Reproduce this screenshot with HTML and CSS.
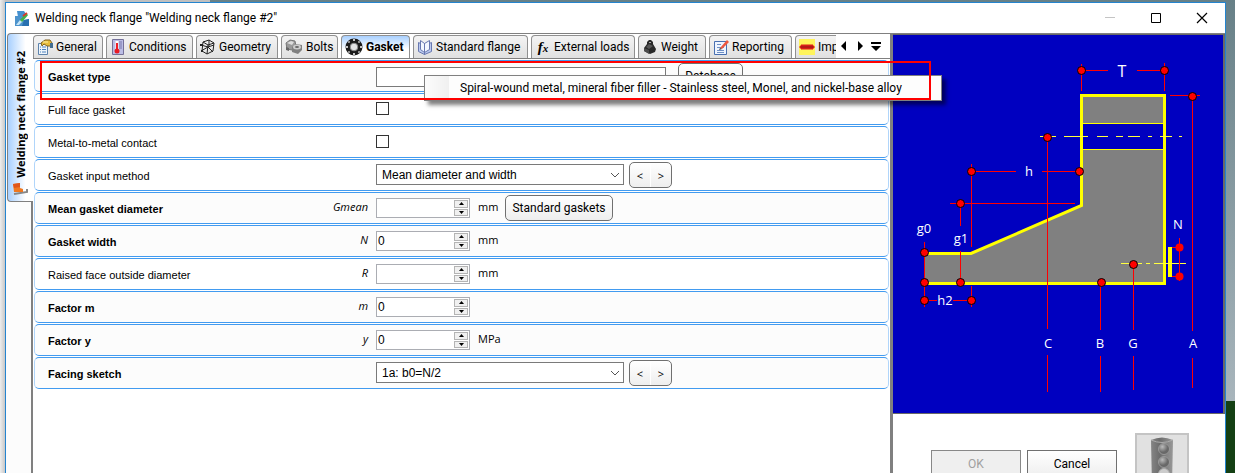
FILE: index.html
```html
<!DOCTYPE html>
<html lang="en">
<head>
    <meta charset="UTF-8">
    <meta name="viewport" content="width=device-width, initial-scale=1.0">
    <title>Welding neck flange</title>
    <link rel="stylesheet" href="styles.css">
</head>
<body>
    <div class="window">
        <header class="titlebar">
            <svg class="app-icon" width="17" height="17" viewBox="0 0 17 17">
                <path d="M1 6h4l4 2 1 2 5-1v7H1z" fill="#4d93cc"/>
                <path d="M10 10l5-1v7H8z" fill="#2870b0"/>
                <path d="M2 15l4-5 3 1-4 4z" fill="#c8e6f8"/>
                <path d="M3 1h7l2 3-3 4-5-1z" fill="#4590cf"/>
                <path d="M7 11l6-7" stroke="#43b04c" stroke-width="3"/>
                <path d="M9 6l4-3" stroke="#d93a2b" stroke-width="2"/>
            </svg>
            <h1 class="title">Welding neck flange "Welding neck flange #2"</h1>
            <div class="window-controls">
                <button class="control" aria-label="Minimize" disabled>
                    <svg width="12" height="12"><path d="M1 5.500h10" stroke="#c4c4c4"/></svg>
                </button>
                <button class="control" aria-label="Maximize">
                    <svg width="12" height="12"><path d="M1.500 1.500h9v9h-9z" stroke="#000" fill="none"/></svg>
                </button>
                <button class="control" aria-label="Close">
                    <svg width="12" height="12"><path d="M1 1l10 10M11 1L1 11" stroke="#000" stroke-width="1.200"/></svg>
                </button>
            </div>
        </header>

        <div class="content">
            <nav class="side-tabs">
                <button class="side-tab">
                    <svg width="15" height="14" viewBox="0 0 15 14">
                        <path d="M1 12l13-2v-3" stroke="#888" stroke-width="2" fill="none"/>
                        <path d="M0 2l7-1v5l3 1v3H1z" fill="#f07820"/>
                        <path d="M0 2l7-1v4l-6 1z" fill="#e0561a"/>
                    </svg>
                    <span>Welding neck flange #2</span>
                </button>
            </nav>

            <main class="main">
                <div class="tab-bar">
                    <div class="tabs" role="tablist">
                        <button class="tab" role="tab">
                            <svg width="16" height="16" viewBox="0 0 16 16">
                                <path d="M1.500 4.500h9v11h-9z" fill="#eef5fb" stroke="#5d83ad"/>
                                <path d="M3 8h1M3 10.500h1M3 13h1M5 8h4M5 10.500h4M5 13h4" stroke="#4e82bd"/>
                                <path d="M4 4l4-3h5l2 3-1 3h-4L7 5 5 7z" fill="#e8bd3b" stroke="#806120"/>
                                <path d="M6 3h5" stroke="#fff1a5"/>
                                <path d="M13 4h3v5h-3z" fill="#426d91"/>
                            </svg>
                            General
                        </button>
                        <button class="tab" role="tab">
                            <svg width="16" height="16" viewBox="0 0 16 16">
                                <path d="M2.500.500h11v15h-11z" fill="#bbbde5" stroke="#747099"/>
                                <path d="M9 3h3M9 5h3M9 7h3M9 9h3" stroke="#7777aa"/>
                                <path d="M7 2v10" stroke="#fff" stroke-width="3"/>
                                <path d="M7 4v8" stroke="#ef2028" stroke-width="2"/>
                                <circle cx="7" cy="12" r="2.500" fill="#e81b24"/>
                            </svg>
                            Conditions
                        </button>
                        <button class="tab" role="tab">
                            <svg width="16" height="16" viewBox="0 0 16 16" fill="none" stroke="#222">
                                <path d="M3 3l6-2 5 3-1 8-6 3-5-3zM3 3l5 3 6-2M8 6l-1 9M1 6l7 2 6-2M1 12l7-4 5 5M9 1v7"/>
                                <path d="M0 5h3v2H0zM1 11h2v2H1z" fill="#222" stroke="none"/>
                            </svg>
                            Geometry
                        </button>
                        <button class="tab" role="tab">
                            <svg width="18" height="16" viewBox="0 0 18 16">
                                <path d="M1 4l4-3 5 1 1 5-4 4-5-1z" fill="#999" stroke="#777"/>
                                <path d="M2 4l4-2 3 1-2 3z" fill="#ddd"/>
                                <path d="M1 8l3 1v3l-3-1z" fill="#666"/>
                                <path d="M7 8l4-3 6 1v5l-4 4-6-2z" fill="#808080"/>
                                <ellipse cx="12" cy="8" rx="4" ry="2.500" fill="#ccc"/>
                                <ellipse cx="12" cy="8" rx="2" ry="1" fill="#666"/>
                            </svg>
                            Bolts
                        </button>
                        <button class="tab tab-active" role="tab" aria-selected="true">
                            <svg width="18" height="18" viewBox="0 0 18 18">
                                <circle cx="9" cy="9" r="8.500" fill="#1b1b1b"/>
                                <circle cx="9" cy="9" r="3.800" fill="#e4e4e4" stroke="#888"/>
                                <path d="M9 1v2M9 15v2M1 9h2M15 9h2M3.500 3.500l1 1M13.500 13.500l1 1M3.500 14.500l1-1M13.500 4.500l1-1" stroke="#fff" stroke-width="1.500"/>
                            </svg>
                            Gasket
                        </button>
                        <button class="tab" role="tab">
                            <svg width="16" height="16" viewBox="0 0 16 16" stroke="#6878b0">
                                <path d="M1.500 3.500l6 3v9l-6-3zM14.500 3.500l-7 3v9l7-3z" fill="#bccaf0"/>
                                <path d="M3.500 1.500l4 3v9l-4-3zM12.500 1.500l-5 3v9l5-3z" fill="#f3f7ff"/>
                            </svg>
                            Standard flange
                        </button>
                        <button class="tab" role="tab">
                            <span class="fx">f<small>x</small></span>
                            External loads
                        </button>
                        <button class="tab" role="tab">
                            <svg width="16" height="16" viewBox="0 0 16 16">
                                <path d="M5 5V3l2-2h2l2 2v2l3 5-1 3-5 2-6-3 0-3z" fill="#292929"/>
                                <path d="M7 4V3h2v1z" fill="#aaa"/>
                                <path d="M2 9l5 2v4l-5-3z" fill="#4c4c4c"/>
                                <path d="M4 8l3-3 4 2-4 3z" fill="#575757"/>
                            </svg>
                            Weight
                        </button>
                        <button class="tab" role="tab">
                            <svg width="16" height="16" viewBox="0 0 16 16">
                                <path d="M1.500 2.500h12v13h-12z" fill="#edf4ff" stroke="#486fb1"/>
                                <path d="M4 5.500h4M4 8.500h7M4 11.500h7M4 13.500h7" stroke="#6d8fc5"/>
                                <path d="M7 9l7-8 2 2-7 7z" fill="#ed573e"/>
                                <path d="M7 9l-1 2 3-1z" fill="#333"/>
                            </svg>
                            Reporting
                        </button>
                        <button class="tab" role="tab">
                            <svg width="16" height="16" viewBox="0 0 16 16">
                                <path d="M0 0h16v16H0z" fill="#fff45c"/>
                                <path d="M0 8l3-3 1 1 1-1 1 1 1-1 1 1 1-1 1 1 1-1 1 1 1-1 3 3-3 3-1-1-1 1-1-1-1 1-1-1-1 1-1-1-1 1-1-1-1 1z" fill="#d91e18"/>
                                <path d="M2 8h12" stroke="#8e1712"/>
                            </svg>
                            Import
                        </button>
                    </div>
                    <div class="tab-scroll">
                        <button aria-label="Scroll left"><svg width="16" height="16"><path d="M10 3v10L5 8z"/></svg></button>
                        <button aria-label="Scroll right"><svg width="16" height="16"><path d="M6 3v10l5-5z"/></svg></button>
                        <button aria-label="Tab list"><svg width="16" height="16"><path d="M3 4h10v2H3zM3 8h10l-5 5z"/></svg></button>
                    </div>
                </div>

                <form class="form">
                    <div class="row row-required">
                        <label class="label" for="gasket-type">Gasket type</label>
                        <span class="symbol"></span>
                        <input class="text-field" id="gasket-type" type="text">
                        <button class="btn btn-database" type="button">Database</button>
                    </div>
                    <div class="row">
                        <label class="label" for="full-face">Full face gasket</label>
                        <span class="symbol"></span>
                        <input class="check" id="full-face" type="checkbox">
                    </div>
                    <div class="row">
                        <label class="label" for="metal-contact">Metal-to-metal contact</label>
                        <span class="symbol"></span>
                        <input class="check" id="metal-contact" type="checkbox">
                    </div>
                    <div class="row">
                        <label class="label" for="input-method">Gasket input method</label>
                        <span class="symbol"></span>
                        <div class="select">
                            <select id="input-method"><option>Mean diameter and width</option></select>
                            <svg width="10" height="6"><path d="M1 1l4 4 4-4" fill="none" stroke="#555"/></svg>
                        </div>
                        <div class="stepper"><button type="button">&lt;</button><button type="button">&gt;</button></div>
                    </div>
                    <div class="row row-required">
                        <label class="label" for="gmean">Mean gasket diameter</label>
                        <span class="symbol">Gmean</span>
                        <div class="number">
                            <input id="gmean" type="text">
                            <div class="spin">
                                <button type="button" aria-label="Increase"><svg width="5" height="3"><path d="M0 3h5L2.500 0z"/></svg></button>
                                <button type="button" aria-label="Decrease"><svg width="5" height="3"><path d="M0 0h5L2.500 3z"/></svg></button>
                            </div>
                        </div>
                        <span class="unit">mm</span>
                        <button class="btn" type="button">Standard gaskets</button>
                    </div>
                    <div class="row row-required">
                        <label class="label" for="width">Gasket width</label>
                        <span class="symbol">N</span>
                        <div class="number">
                            <input id="width" type="text" value="0">
                            <div class="spin">
                                <button type="button" aria-label="Increase"><svg width="5" height="3"><path d="M0 3h5L2.500 0z"/></svg></button>
                                <button type="button" aria-label="Decrease"><svg width="5" height="3"><path d="M0 0h5L2.500 3z"/></svg></button>
                            </div>
                        </div>
                        <span class="unit">mm</span>
                    </div>
                    <div class="row">
                        <label class="label" for="raised">Raised face outside diameter</label>
                        <span class="symbol">R</span>
                        <div class="number">
                            <input id="raised" type="text">
                            <div class="spin">
                                <button type="button" aria-label="Increase"><svg width="5" height="3"><path d="M0 3h5L2.500 0z"/></svg></button>
                                <button type="button" aria-label="Decrease"><svg width="5" height="3"><path d="M0 0h5L2.500 3z"/></svg></button>
                            </div>
                        </div>
                        <span class="unit">mm</span>
                    </div>
                    <div class="row row-required">
                        <label class="label" for="factor-m">Factor m</label>
                        <span class="symbol">m</span>
                        <div class="number">
                            <input id="factor-m" type="text" value="0">
                            <div class="spin">
                                <button type="button" aria-label="Increase"><svg width="5" height="3"><path d="M0 3h5L2.500 0z"/></svg></button>
                                <button type="button" aria-label="Decrease"><svg width="5" height="3"><path d="M0 0h5L2.500 3z"/></svg></button>
                            </div>
                        </div>
                    </div>
                    <div class="row row-required">
                        <label class="label" for="factor-y">Factor y</label>
                        <span class="symbol">y</span>
                        <div class="number">
                            <input id="factor-y" type="text" value="0">
                            <div class="spin">
                                <button type="button" aria-label="Increase"><svg width="5" height="3"><path d="M0 3h5L2.500 0z"/></svg></button>
                                <button type="button" aria-label="Decrease"><svg width="5" height="3"><path d="M0 0h5L2.500 3z"/></svg></button>
                            </div>
                        </div>
                        <span class="unit">MPa</span>
                    </div>
                    <div class="row row-required">
                        <label class="label" for="facing">Facing sketch</label>
                        <span class="symbol"></span>
                        <div class="select">
                            <select id="facing"><option>1a: b0=N/2</option></select>
                            <svg width="10" height="6"><path d="M1 1l4 4 4-4" fill="none" stroke="#555"/></svg>
                        </div>
                        <div class="stepper"><button type="button">&lt;</button><button type="button">&gt;</button></div>
                    </div>
                </form>
            </main>

            <aside class="side">
                <svg class="diagram" viewBox="893 35 330 378" role="img" aria-label="Flange sketch">
                    <!-- flange body -->
                    <path d="M924 253H971L1081 205V96H1164V283H924z" fill="#808080"/>
                    <path d="M1082 123h82v27h-82z" fill="#0000c0"/>
                    <path d="M1082 123.500h82M1082 149.500h82" stroke="#ffff00"/>
                    <path d="M924 253.500H971L1081.500 205.500V95.500H1164.500V283.500H924" fill="none" stroke="#ffff00" stroke-width="3"/>
                    <path d="M1170 247v30" stroke="#ffff00" stroke-width="4"/>
                    <!-- centre lines -->
                    <path d="M1040 136.500h16M1064 136.500h24M1097 136.500h11M1116 136.500h7M1128 136.500h12M1148 136.500h4M1160 136.500h12M1179 136.500h3M1121 263.500h21M1146 263.500h4M1154 263.500h32" stroke="#ffff40"/>
                    <!-- dimension lines -->
                    <g stroke="#ff0000" fill="none">
                        <path d="M1081.500 64v27M1164.500 63v28M1086 70.500h22M1137 70.500h23"/>
                        <path d="M1170 95.500h30M1192.500 96v235M1192.500 358v30"/>
                        <path d="M1047.500 137v192M1047.500 355v37"/>
                        <path d="M971.500 164v83M971.500 286v21M976 171.500h40M1042 171.500h34"/>
                        <path d="M950 203.500h125M960.500 203v23M960.500 251v31"/>
                        <path d="M924.500 242v65M929 300.500h8M953 300.500h14"/>
                        <path d="M1100.500 283v47M1100.500 356v36M1133.500 264v66M1133.500 356v34"/>
                        <path d="M1179.500 238v43M1172 247.500h7M1172 276.500h7"/>
                    </g>
                    <g fill="#ff0000" stroke="#000000">
                        <circle cx="1081.500" cy="70.500" r="4"/>
                        <circle cx="1164.500" cy="70.500" r="4"/>
                        <circle cx="1192.500" cy="96.500" r="4"/>
                        <circle cx="1047.500" cy="137.500" r="4"/>
                        <circle cx="971.500" cy="171.500" r="4"/>
                        <circle cx="1079.500" cy="171.500" r="4"/>
                        <circle cx="960.500" cy="203.500" r="4"/>
                        <circle cx="924.500" cy="252.500" r="4"/>
                        <circle cx="924.500" cy="282.500" r="4"/>
                        <circle cx="924.500" cy="300.500" r="4"/>
                        <circle cx="960.500" cy="282.500" r="4"/>
                        <circle cx="971.500" cy="300.500" r="4"/>
                        <circle cx="1101.500" cy="282.500" r="4"/>
                        <circle cx="1133.500" cy="264.500" r="4"/>
                    </g>
                    <circle cx="1179.500" cy="247.500" r="4" fill="#ff0000"/>
                    <circle cx="1179.500" cy="276.500" r="4" fill="#ff0000"/>
                    <g class="dim-text">
                        <text class="dim-large" x="1122" y="77">T</text>
                        <text x="1029" y="176">h</text>
                        <text x="924" y="233">g0</text>
                        <text x="961" y="243">g1</text>
                        <text x="945" y="305">h2</text>
                        <text x="1178" y="229">N</text>
                        <text x="1048" y="348">C</text>
                        <text x="1100" y="348">B</text>
                        <text x="1133" y="348">G</text>
                        <text x="1193" y="348">A</text>
                    </g>
                </svg>
                <div class="actions">
                    <button class="action" disabled>OK</button>
                    <button class="action">Cancel</button>
                    <button class="status" aria-label="Status">
                        <svg width="26" height="48" viewBox="0 0 26 48">
                            <defs>
                                <linearGradient id="case"><stop stop-color="#858585"/><stop offset=".4" stop-color="#6c6c6c"/><stop offset="1" stop-color="#989898"/></linearGradient>
                                <radialGradient id="lamp" cx=".35" cy=".3"><stop stop-color="#bbb"/><stop offset="1" stop-color="#686868"/></radialGradient>
                            </defs>
                            <path d="M2 3q11-5 22 0l-1 45H3z" fill="url(#case)"/>
                            <path d="M2 3q11 5 22 0" fill="none" stroke="#aaa"/>
                            <circle cx="15" cy="12" r="5.500" fill="url(#lamp)" stroke="#999"/>
                            <circle cx="15" cy="25" r="5.500" fill="url(#lamp)" stroke="#999"/>
                            <circle cx="15" cy="37" r="5.500" fill="#ccc" stroke="#aaa"/>
                        </svg>
                    </button>
                </div>
            </aside>
        </div>
    </div>

    <div class="popup" role="menu">
        <button class="popup-item" role="menuitem">Spiral-wound metal, mineral fiber filler - Stainless steel, Monel, and nickel-base alloy</button>
    </div>
    <div class="highlight"></div>
</body>
</html>
```
FILE: styles.css
```css
* {
    box-sizing: border-box;
}

body {
    margin: 0;
    height: 100vh;
    overflow: hidden;
    padding: 2px 9px 0 5px;
    font-family: Roboto, "Segoe UI", sans-serif;
    font-size: 12px;
    color: #000;
    background:
        linear-gradient(90deg, #eeeeee, #c8c8c8) left / 5px 100% no-repeat,
        linear-gradient(#c0c0c0, #c0c0c0) left top / 210px 2px no-repeat,
        linear-gradient(#144014, #144014) right bottom / 9px 72px no-repeat,
        linear-gradient(#678087, #a8b5bc 400px);
}

button,
input,
select {
    font: inherit;
    color: inherit;
}

button {
    padding: 0;
    border: none;
    background: none;
}

svg {
    display: block;
    flex-shrink: 0;
}

.window {
    height: 100%;
    display: flex;
    flex-direction: column;
    background: #fff;
    border: 1px solid #2484cf;
    border-bottom: none;
}

.titlebar {
    height: 30px;
    display: flex;
    align-items: center;
    padding-left: 8px;
    gap: 4px;
}

.title {
    margin: 0;
    font-size: 12px;
    font-weight: 400;
}

.window-controls {
    margin-left: auto;
    display: flex;
}

.control {
    width: 46px;
    height: 28px;
    display: flex;
    align-items: center;
    justify-content: center;
}

.content {
    flex: 1;
    min-height: 0;
    display: grid;
    grid-template-columns: 27px 1fr 335px;
}

/* vertical tabs */
.side-tabs {
    background: #fcfcfc;
    padding-left: 1px;
    border-right: 2px solid #808080;
}

.side-tab {
    width: 26px;
    height: 169px;
    display: flex;
    flex-direction: column-reverse;
    align-items: center;
    gap: 4px;
    padding-bottom: 5px;
    border: 1px solid #808080;
    border-right: none;
    border-radius: 4px 0 0 4px;
    background: linear-gradient(90deg, #a8d0ff, #fff 70%);
    font-family: "Open Sans", sans-serif;
    font-size: 11px;
    font-weight: 700;
}

.side-tab span {
    writing-mode: vertical-rl;
    transform: rotate(180deg);
    white-space: nowrap;
}

/* tab bar */
.main {
    min-width: 0;
    border-top: 1px solid #808080;
    background: #fff;
}

.tab-bar {
    height: 25px;
    display: flex;
    border-bottom: 1px solid #808080;
}

.tabs {
    flex: 1;
    min-width: 0;
    overflow: hidden;
    display: grid;
    grid-template-columns: 70px 87px 82px 57px 69px 115px 104px 68px 83px 70px;
    gap: 3px;
    padding-top: 1px;
}

.tab {
    display: flex;
    align-items: center;
    gap: 3px;
    padding: 0 3px;
    border: 1px solid #909090;
    border-bottom: none;
    border-radius: 4px 4px 0 0;
    background: linear-gradient(#f4f4f4, #e0e0e0);
    white-space: nowrap;
}

.tab-active {
    background: linear-gradient(#a8d0ff, #fff 60%);
    font-weight: 700;
}

.fx {
    width: 16px;
    font: italic 700 15px/16px "Liberation Serif", serif;
    text-align: center;
}

.fx small {
    font-size: 11px;
}

.tab-scroll {
    display: flex;
    align-items: center;
    padding: 0 6px 0 0;
    background: #fff;
}

.tab-scroll button {
    width: 16px;
}

/* form rows */
.form {
    display: grid;
    gap: 1px;
    padding: 1px 1px 0 1px;
    font-family: "Liberation Sans", Arial, sans-serif;
}

.row {
    height: 32px;
    display: flex;
    align-items: center;
    padding: 2px 0 0 13px;
    border: 1px solid #429bf0;
    border-left-color: #b0d5fa;
    border-right-color: #b0d5fa;
    border-radius: 5px;
    font-size: 12px;
}

.row-required {
    background: #fcfcfc;
}

.label {
    width: 240px;
    font-size: 11px;
}

.row-required .label {
    font-weight: 700;
}

.symbol {
    width: 80px;
    margin: 0 8px 5px 0;
    text-align: right;
    font-family: "Open Sans", sans-serif;
    font-size: 11px;
    font-style: italic;
}

.text-field {
    width: 290px;
    height: 20px;
    border: 1px solid #7a7a7a;
}

.check {
    appearance: none;
    width: 13px;
    height: 13px;
    margin: 0 0 4px;
    border: 1px solid #333;
    background: #fff;
}

.select {
    display: grid;
    align-items: center;
    width: 248px;
    margin-bottom: 3px;
}

.select select,
.select svg {
    grid-area: 1 / 1;
}

.select select {
    appearance: none;
    height: 21px;
    padding: 0 5px;
    border: 1px solid #7a7a7a;
    border-radius: 0;
    background: #fff;
}

.select svg {
    justify-self: end;
    margin-right: 4px;
    pointer-events: none;
}

.stepper {
    display: flex;
    margin-left: 5px;
    margin-bottom: 2px;
    border: 1px solid #707070;
    border-radius: 5px;
    background: linear-gradient(#fff, #eee);
}

.stepper button {
    width: 20px;
    height: 24px;
    font-family: "Open Sans", sans-serif;
    font-size: 11px;
}

.stepper button + button {
    width: 21px;
    border-left: 1px solid #fff;
}

.number {
    display: flex;
    width: 94px;
    height: 20px;
    margin-bottom: 2px;
    border: 1px solid #abadb3;
    background: #fff;
}

.number input {
    flex: 1;
    min-width: 0;
    padding: 0 1px;
    border: none;
    background: none;
}

.spin {
    width: 16px;
    display: grid;
    grid-template-rows: 1fr 1fr;
    gap: 1px;
    padding: 1px;
}

.spin button {
    display: flex;
    align-items: center;
    justify-content: center;
    background: #f0f0f0;
    border: 1px solid #b4b4b4;
}

.unit {
    width: 27px;
    margin: 0 0 5px 8px;
    font-family: "Open Sans", sans-serif;
    font-size: 11px;
}

.btn {
    height: 26px;
    padding: 0 6px;
    margin-bottom: 2px;
    border: 1px solid #707070;
    border-radius: 5px;
    background: linear-gradient(#fff, #eee);
    font-family: Roboto, sans-serif;
    font-size: 12px;
}

.unit + .btn {
    width: 108px;
}

.btn-database {
    width: 65px;
    margin-left: 12px;
}

/* sketch and dialog buttons */
.side {
    border-left: 3px solid #808080;
    border-top: 1px solid #808080;
}

.diagram {
    width: 100%;
    background: #0000c0;
    border: 1px solid #686868;
    border-left: none;
    border-right-width: 2px;
}

.dim-text {
    fill: #fff;
    font-family: "Open Sans", sans-serif;
    font-size: 13px;
    text-anchor: middle;
}

.dim-large {
    font-size: 16px;
}

.actions {
    display: flex;
    align-items: flex-start;
    gap: 6px;
    padding: 19px 0 0 38px;
}

.action {
    width: 90px;
    height: 28px;
    margin-top: 17px;
    border: 1px solid #707070;
    background: linear-gradient(#fff, #eee);
}

.action:disabled {
    color: #a0a0a0;
    border-color: #888;
    background: #efefef;
}

.status {
    width: 54px;
    height: 54px;
    margin-left: 12px;
    display: flex;
    justify-content: center;
    padding-top: 2px;
    border: 2px solid #c4c4c4;
    background: #e1e1e1;
}

/* drop-down over the form */
.popup {
    position: absolute;
    left: 424px;
    top: 75px;
    width: 518px;
    height: 26px;
    padding: 1px;
    border: 1px solid #808080;
    background: linear-gradient(90deg, #fcfcfc, #f0f0f0) left / 24px 100% no-repeat, #fdfdfd;
    box-shadow: 4px 4px 4px rgba(0, 0, 0, 0.5);
}

.popup-item {
    padding-left: 34px;
    line-height: 22px;
    white-space: nowrap;
}

.highlight {
    position: absolute;
    left: 40px;
    top: 61px;
    width: 891px;
    height: 39px;
    border: 2px solid #ff0000;
    pointer-events: none;
}
```
